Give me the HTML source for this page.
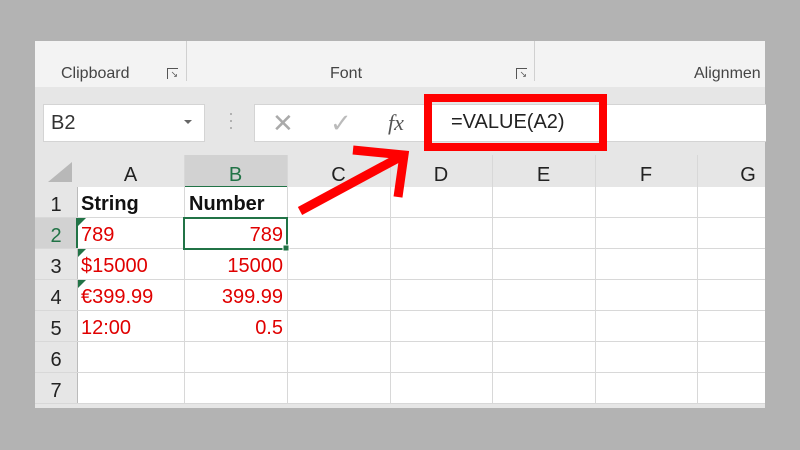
<!DOCTYPE html>
<html><head><style>
body{margin:0;width:800px;height:450px;background:#b3b3b3;position:relative;overflow:hidden;font-family:"Liberation Sans",sans-serif}
.a{position:absolute}
.t{font-size:20px;color:#e00000}
.h{font-size:20px;color:#222;text-align:center}
</style></head><body>
<div class="a" style="left:35px;top:41px;width:730px;height:46px;background:#f3f3f3"></div>
<div class="a" style="left:35px;top:87px;width:730px;height:68px;background:#e6e6e6"></div>
<div class="a" style="left:186px;top:41px;width:1px;height:40px;background:#d0d0d0"></div>
<div class="a" style="left:534px;top:41px;width:1px;height:40px;background:#d0d0d0"></div>
<div class="a" style="left:61px;top:65px;font-size:16px;color:#444">Clipboard</div>
<div class="a" style="left:330px;top:65px;font-size:16px;color:#444">Font</div>
<div class="a" style="left:694px;top:65px;font-size:16px;color:#444">Alignmen</div>
<div class="a" style="left:167px;top:68px;width:10px;height:10px;border-left:1px solid #555;border-top:1px solid #555;font-size:9px;line-height:10px;color:#555;text-align:right">↘</div>
<div class="a" style="left:516px;top:68px;width:10px;height:10px;border-left:1px solid #555;border-top:1px solid #555;font-size:9px;line-height:10px;color:#555;text-align:right">↘</div>
<div class="a" style="left:43px;top:104px;width:160px;height:36px;background:#fff;border:1px solid #d4d4d4"></div>
<div class="a" style="left:51px;top:112px;font-size:20px;color:#333">B2</div>
<div class="a" style="left:184px;top:120px;border:4px solid transparent;border-top:4px solid #666"></div>
<div class="a" style="left:228px;top:110px;color:#aaa;font-size:18px;line-height:7px">·<br>·<br>·</div>
<div class="a" style="left:254px;top:104px;width:511px;height:36px;background:#fff;border:1px solid #d4d4d4;border-right:none"></div>
<div class="a" style="left:272px;top:108px;font-size:26px;color:#aaa">✕</div>
<div class="a" style="left:330px;top:108px;font-size:26px;color:#bbb">✓</div>
<div class="a" style="left:388px;top:110px;font-size:22px;color:#555;font-family:'Liberation Serif',serif;font-style:italic">fx</div>
<div class="a" style="left:424px;top:94px;width:167px;height:41px;border:8px solid #f00"></div>
<div class="a" style="left:451px;top:111px;font-size:20px;color:#222">=VALUE(A2)</div>
<div class="a" style="left:35px;top:155px;width:730px;height:32px;background:#e6e6e6;border-bottom:1px solid #bbb"></div>
<div class="a" style="left:35px;top:187px;width:42px;height:221px;background:#e6e6e6;border-right:1px solid #bbb"></div>
<div class="a" style="left:184px;top:155px;width:103px;height:31px;background:#d2d2d2;border-bottom:2px solid #217346"></div>
<div class="a" style="left:35px;top:218px;width:41px;height:31px;background:#d2d2d2;border-right:2px solid #217346"></div>
<svg class="a" style="left:44px;top:160px" width="30" height="24"><polygon points="28,2 28,22 4,22" fill="#b8b8b8"/></svg>
<div class="a" style="left:78px;top:187px;width:687px;height:217px;background:#fff"></div>
<svg class="a" style="left:0;top:0" width="800" height="450">
<g stroke="#d8d8d8" stroke-width="1">
<line x1="184.5" y1="155" x2="184.5" y2="408"/><line x1="287.5" y1="155" x2="287.5" y2="408"/><line x1="390.5" y1="155" x2="390.5" y2="408"/><line x1="492.5" y1="155" x2="492.5" y2="408"/><line x1="595.5" y1="155" x2="595.5" y2="408"/><line x1="697.5" y1="155" x2="697.5" y2="408"/>
<line x1="35" y1="217.5" x2="765" y2="217.5"/><line x1="35" y1="248.5" x2="765" y2="248.5"/><line x1="35" y1="279.5" x2="765" y2="279.5"/><line x1="35" y1="310.5" x2="765" y2="310.5"/><line x1="35" y1="341.5" x2="765" y2="341.5"/><line x1="35" y1="372.5" x2="765" y2="372.5"/><line x1="35" y1="403.5" x2="765" y2="403.5"/>
</g>
<rect x="35" y="404" width="730" height="4" fill="#e6e6e6"/>
<rect x="184" y="218" width="103" height="31" fill="none" stroke="#217346" stroke-width="2"/>
<rect x="283" y="245" width="6" height="6" fill="#217346" stroke="#fff"/>
<polygon points="78,218 86,218 78,226" fill="#217346"/>
<polygon points="78,249 86,249 78,257" fill="#217346"/>
<polygon points="78,280 86,280 78,288" fill="#217346"/>
<g stroke="#f00" stroke-width="9" fill="none"><line x1="300" y1="211" x2="402" y2="156"/><polyline points="353,150 404,155 398,197"/></g>
</svg>
<div class="a h" style="left:77px;top:164px;width:107px">A</div>
<div class="a h" style="left:184px;top:164px;width:103px;color:#217346">B</div>
<div class="a h" style="left:287px;top:164px;width:103px">C</div>
<div class="a h" style="left:390px;top:164px;width:102px">D</div>
<div class="a h" style="left:492px;top:164px;width:103px">E</div>
<div class="a h" style="left:595px;top:164px;width:102px">F</div>
<div class="a h" style="left:697px;top:164px;width:102px">G</div>
<div class="a h" style="left:35px;top:194px;width:42px">1</div>
<div class="a h" style="left:35px;top:225px;width:42px;color:#217346">2</div>
<div class="a h" style="left:35px;top:256px;width:42px">3</div>
<div class="a h" style="left:35px;top:287px;width:42px">4</div>
<div class="a h" style="left:35px;top:318px;width:42px">5</div>
<div class="a h" style="left:35px;top:349px;width:42px">6</div>
<div class="a h" style="left:35px;top:380px;width:42px">7</div>
<div class="a" style="left:81px;top:193px;font-size:20px;font-weight:bold;color:#111">String</div>
<div class="a" style="left:189px;top:193px;font-size:20px;font-weight:bold;color:#111">Number</div>
<div class="a t" style="left:81px;top:224px">789</div>
<div class="a t" style="left:81px;top:255px">$15000</div>
<div class="a t" style="left:81px;top:286px">€399.99</div>
<div class="a t" style="left:81px;top:317px">12:00</div>
<div class="a t" style="left:184px;top:224px;width:99px;text-align:right">789</div>
<div class="a t" style="left:184px;top:255px;width:99px;text-align:right">15000</div>
<div class="a t" style="left:184px;top:286px;width:99px;text-align:right">399.99</div>
<div class="a t" style="left:184px;top:317px;width:99px;text-align:right">0.5</div>
</body></html>
